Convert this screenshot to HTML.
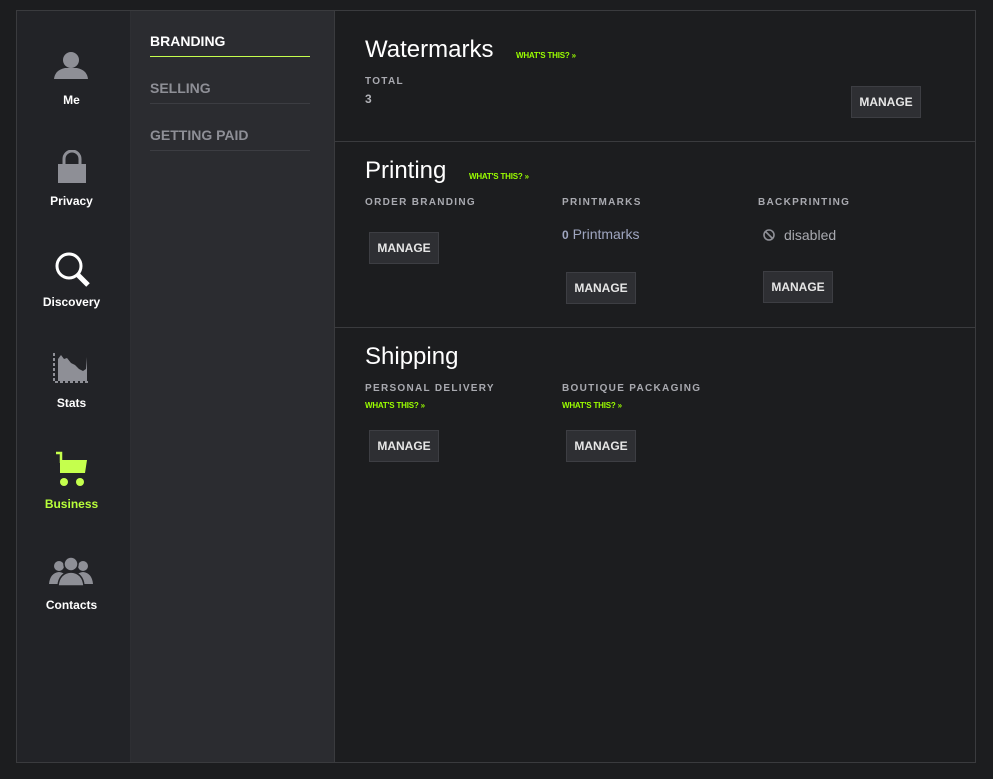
<!DOCTYPE html>
<html><head><meta charset="utf-8"><style>
*{margin:0;padding:0;box-sizing:border-box}
body{width:993px;height:779px;background:#1c1d1f;font-family:"Liberation Sans",sans-serif;position:relative;overflow:hidden}
.frame{position:absolute;left:16px;top:10px;width:960px;height:753px;border:1px solid #3a3b3e;background:#1c1d1f}
.side{position:absolute;left:0;top:0;width:114px;height:751px;background:#222327;border-right:1px solid #2e2f33}
.sub{position:absolute;left:114px;top:0;width:204px;height:751px;background:#2b2c30;border-right:1px solid #3a3b3e}
.a{position:absolute}
.nav{position:absolute;left:0;width:109px;text-align:center;color:#fff;font-size:12px;font-weight:bold}
.sn{position:absolute;left:19px;width:160px;font-size:14px;font-weight:bold;color:#8e8f96;border-bottom:1px solid #3c3d42;padding-bottom:7px}
.h{color:#fff;font-size:24px;position:absolute}
.w{color:#9bff00;font-size:8px;font-weight:bold;position:absolute;letter-spacing:-.2px}
.lbl{color:#a9aab0;font-size:10px;font-weight:bold;letter-spacing:1.3px;position:absolute}
.btn{position:absolute;width:70px;height:32px;background:#2e2f33;border:1px solid #3d3e43;color:#e6e6e6;font-size:12px;font-weight:bold;text-align:center;line-height:30px}
.hr{position:absolute;left:318px;width:641px;height:1px;background:#3a3b3e}
</style></head><body>
<div class="frame">
<div class="side">
<svg class="a" style="left:36px;top:40px" width="36" height="28" viewBox="0 0 36 28"><circle cx="18" cy="9" r="8" fill="#8e8f96"/><path d="M1 28 Q2 19 12 17 L24 17 Q34 19 35 28Z" fill="#8e8f96"/></svg>
<div class="nav" style="top:82px">Me</div>
<svg class="a" style="left:40px;top:139px" width="30" height="33" viewBox="0 0 30 33"><path d="M7 15 V9 a8 8 0 0 1 16 0 V15" fill="none" stroke="#8e8f96" stroke-width="3"/><rect x="1" y="14" width="28" height="19" fill="#8e8f96"/></svg>
<div class="nav" style="top:183px">Privacy</div>
<svg class="a" style="left:37px;top:240px" width="38" height="38" viewBox="0 0 38 38"><circle cx="15" cy="15" r="12" fill="none" stroke="#fff" stroke-width="3"/><path d="M24 24 L34 34" stroke="#fff" stroke-width="5"/></svg>
<div class="nav" style="top:284px">Discovery</div>
<svg class="a" style="left:36px;top:342px" width="36" height="30" viewBox="0 0 36 30"><path d="M5 28 L5 6 L8 2 L11 6 L14 5 L18 10 L22 12 L26 16 L30 18 L33 16 L34 4 L34 28Z" fill="#8e8f96"/><path d="M1 0 V29 H35" fill="none" stroke="#8e8f96" stroke-width="2" stroke-dasharray="3 2"/></svg>
<div class="nav" style="top:385px">Stats</div>
<svg class="a" style="left:37px;top:440px" width="34" height="36" viewBox="0 0 34 36"><path d="M2 2 H7 V12" fill="none" stroke="#c5ff4d" stroke-width="2.5"/><path d="M6 9 H33 L31 22 H6Z" fill="#c5ff4d"/><circle cx="10" cy="31" r="4" fill="#c5ff4d"/><circle cx="26" cy="31" r="4" fill="#c5ff4d"/></svg>
<div class="nav" style="top:486px;color:#b8ff3a">Business</div>
<svg class="a" style="left:32px;top:545px" width="44" height="30" viewBox="0 0 44 30"><circle cx="10" cy="10" r="5" fill="#8e8f96"/><circle cx="34" cy="10" r="5" fill="#8e8f96"/><path d="M0 28 Q1 17 10 16 Q19 17 20 28Z M24 28 Q25 17 34 16 Q43 17 44 28Z" fill="#8e8f96"/><circle cx="22" cy="8" r="7" fill="#8e8f96" stroke="#222327" stroke-width="1.5"/><path d="M9 30 Q10 17 22 16 Q34 17 35 30Z" fill="#8e8f96" stroke="#222327" stroke-width="1.5"/></svg>
<div class="nav" style="top:587px">Contacts</div>
</div>
<div class="sub">
<div class="sn" style="top:22px;color:#fff;border-bottom-color:#c5ff4d">BRANDING</div>
<div class="sn" style="top:69px">SELLING</div>
<div class="sn" style="top:116px">GETTING PAID</div>
</div>
<div class="h" style="left:348px;top:25px">Watermarks</div>
<div class="w" style="left:499px;top:40px">WHAT'S THIS? »</div>
<div class="lbl" style="left:348px;top:65px">TOTAL</div>
<div class="a" style="left:348px;top:81px;color:#b0b1b6;font-size:12px;font-weight:bold">3</div>
<div class="btn" style="left:834px;top:75px">MANAGE</div>
<div class="hr" style="top:130px"></div>
<div class="h" style="left:348px;top:146px">Printing</div>
<div class="w" style="left:452px;top:161px">WHAT'S THIS? »</div>
<div class="lbl" style="left:348px;top:186px">ORDER BRANDING</div>
<div class="lbl" style="left:545px;top:186px">PRINTMARKS</div>
<div class="lbl" style="left:741px;top:186px">BACKPRINTING</div>
<div class="btn" style="left:352px;top:221px">MANAGE</div>
<div class="a" style="left:545px;top:215px;color:#9fa6c0;font-size:14px"><b style="font-size:12px">0</b> Printmarks</div>
<svg class="a" style="left:746px;top:218px" width="12" height="12" viewBox="0 0 12 12"><circle cx="6" cy="6" r="5" fill="none" stroke="#8e8f96" stroke-width="1.6"/><path d="M2.5 2.5 L9.5 9.5" stroke="#8e8f96" stroke-width="1.6"/></svg>
<div class="a" style="left:767px;top:216px;color:#a9aab0;font-size:14px">disabled</div>
<div class="btn" style="left:549px;top:261px">MANAGE</div>
<div class="btn" style="left:746px;top:260px">MANAGE</div>
<div class="hr" style="top:316px"></div>
<div class="h" style="left:348px;top:332px">Shipping</div>
<div class="lbl" style="left:348px;top:372px">PERSONAL DELIVERY</div>
<div class="lbl" style="left:545px;top:372px">BOUTIQUE PACKAGING</div>
<div class="w" style="left:348px;top:390px">WHAT'S THIS? »</div>
<div class="w" style="left:545px;top:390px">WHAT'S THIS? »</div>
<div class="btn" style="left:352px;top:419px">MANAGE</div>
<div class="btn" style="left:549px;top:419px">MANAGE</div>
</div>
</body></html>
